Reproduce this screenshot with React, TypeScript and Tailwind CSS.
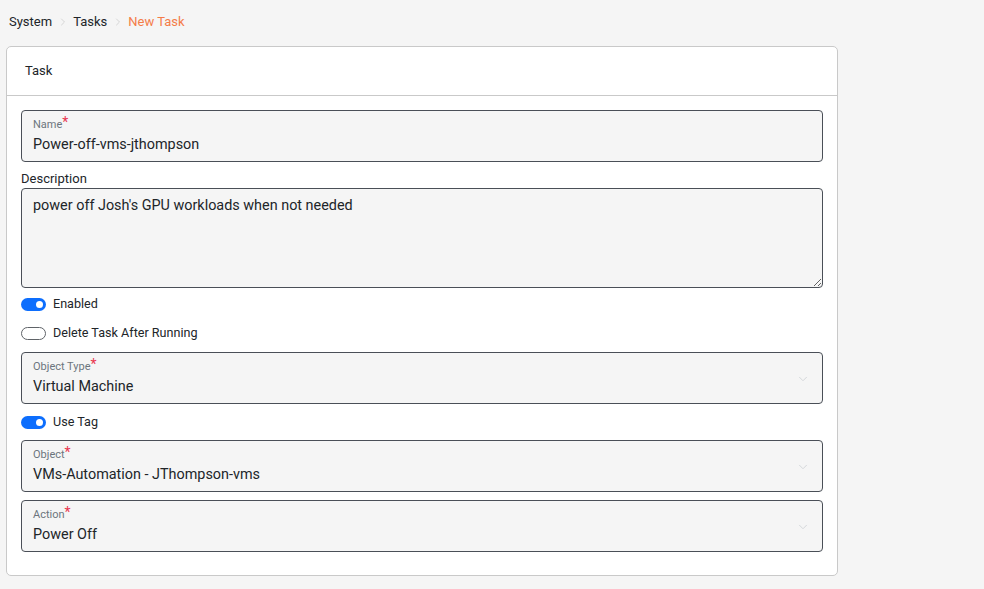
import { ChevronRight, ChevronDown } from "lucide-react";

function Toggle({ on, label }: { on: boolean; label: string }) {
  return (
    <div className="flex h-[29px] items-center gap-[7px]">
      <span
        className={
          on
            ? "flex h-[13px] w-[25px] items-center justify-end rounded-full bg-[#0d6efd] pr-[3px]"
            : "flex h-[13px] w-[25px] items-center justify-start rounded-full border border-[#5f6368] bg-white pl-[2px]"
        }
      >
        {on && <span className="h-[7px] w-[7px] rounded-full bg-white" />}
      </span>
      <span className="text-[12.6px] text-[#212529]">{label}</span>
    </div>
  );
}

function Field({ label, value, select }: { label: string; value: string; select?: boolean }) {
  return (
    <div className="relative flex h-[52px] flex-col rounded-[4px] border border-[#4a4f57] bg-[#f5f5f5] px-[11px] pt-[6px]">
      <span className="flex items-start text-[11px] leading-[16px] text-[#6c757d]">
        {label}
        <span className="-mt-[2px] text-[14px] leading-[14px] text-[#e8364f]">*</span>
      </span>
      <span className="mt-[2px] text-[14.4px] leading-[20px] text-[#212529]">{value}</span>
      {select && (
        <ChevronDown
          size={14}
          strokeWidth={1.5}
          className="absolute right-[12px] top-[19px] text-[#cfd2d6]"
        />
      )}
    </div>
  );
}

export default function App() {
  return (
    <div
      className="min-h-[589px] bg-[#f5f5f5] px-[6px] pb-[14px]"
      style={{ fontFamily: "Roboto, 'Liberation Sans', sans-serif" }}
    >
      <nav className="flex h-[43px] items-center pl-[3px] pt-[1px] text-[13px]">
        <span className="text-[#212529]">System</span>
        <ChevronRight size={12} className="mx-[4.5px] text-[#d6d6d6]" />
        <span className="text-[#212529]">Tasks</span>
        <ChevronRight size={12} className="mx-[4.5px] text-[#d6d6d6]" />
        <span className="text-[#f47c48]">New Task</span>
      </nav>
      <div className="mt-[3px] w-[832px] rounded-[5px] border border-[#c9c9c9] bg-white">
        <div className="flex h-[49px] items-center border-b border-[#c9c9c9] pl-[18px] text-[13px] text-[#212529]">
          Task
        </div>
        <div className="px-[14px] pb-[23px] pt-[14px]">
          <Field label="Name" value="Power-off-vms-jthompson" />
          <div className="mt-[8px] text-[13px] leading-[18px] text-[#212529]">Description</div>
          <textarea
            readOnly
            defaultValue="power off Josh's GPU workloads when not needed"
            className="block h-[100px] w-full resize-y rounded-[4px] border border-[#4a4f57] bg-[#f5f5f5] px-[11px] py-[6px] text-[14.4px] text-[#212529] outline-none"
          />
          <div className="mt-[2px]">
            <Toggle on label="Enabled" />
            <Toggle on={false} label="Delete Task After Running" />
          </div>
          <div className="mt-[4px]">
            <Field label="Object Type" value="Virtual Machine" select />
          </div>
          <div className="mt-[4px]">
            <Toggle on label="Use Tag" />
          </div>
          <div className="mt-[3px]">
            <Field label="Object" value="VMs-Automation - JThompson-vms" select />
          </div>
          <div className="mt-[8px]">
            <Field label="Action" value="Power Off" select />
          </div>
        </div>
      </div>
    </div>
  );
}
